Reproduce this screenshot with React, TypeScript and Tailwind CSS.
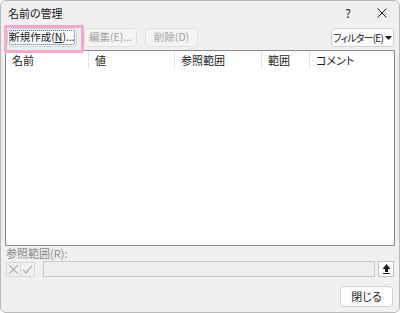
const font = { fontFamily: '"Noto Sans CJK JP", "Noto Sans", sans-serif' };

function Btn({ children, disabled, className = "" }: { children: React.ReactNode; disabled?: boolean; className?: string }) {
  return (
    <button
      className={`h-[19px] rounded-[4px] border leading-none whitespace-nowrap flex items-center justify-center ${
        disabled ? "border-[#e0e0e0] bg-[#f5f5f5] text-[#a0a0a0]" : "border-[#d0d0d0] bg-[#fdfdfd] text-[#1a1a1a]"
      } ${className}`}
    >
      {children}
    </button>
  );
}

export default function App() {
  const cols = [
    { label: "名前", w: "w-[83px]" },
    { label: "値", w: "w-[86px]" },
    { label: "参照範囲", w: "w-[87px]" },
    { label: "範囲", w: "w-[48px]" },
    { label: "コメント", w: "flex-1" },
  ];
  return (
    <div style={font} className="w-[400px] h-[313px] bg-white [font-feature-settings:'palt']">
      <div className="relative w-full h-full bg-[#f0f0f0] border border-[#b8b8b8] rounded-[6px] flex flex-col text-[#1a1a1a] overflow-hidden">
        {/* title bar */}
        <div className="h-[24px] flex items-center justify-between pl-[7px]">
          <span className="text-[11px]">名前の管理</span>
          <div className="flex items-center h-full">
            <span className="w-[34px] text-center text-[12px]">?</span>
            <span className="w-[34px] flex justify-center">
              <svg width="10" height="10" viewBox="0 0 10 10"><path d="M0.5 0.5L9.5 9.5M9.5 0.5L0.5 9.5" stroke="#1a1a1a" strokeWidth="1" /></svg>
            </span>
          </div>
        </div>

        {/* toolbar */}
        <div className="flex items-center pl-[6px] pr-[5px] mt-[3px] h-[19px]">
          <Btn className="w-[70px] text-[10.5px] border-[#5b8fd6] outline outline-1 outline-dotted outline-[#2a62b8] -outline-offset-[3px]">
            新規作成(<span className="underline">N</span>)...
          </Btn>
          <Btn disabled className="w-[53px] ml-[7px] text-[10.5px]">編集(E)...</Btn>
          <Btn disabled className="w-[53px] ml-[8px] text-[10.5px]">削除(D)</Btn>
          <div className="flex-1" />
          <Btn className="w-[63px] gap-[2px] text-[10px] tracking-[-0.8px]">
            <span>フィルター(E)</span>
            <svg width="7" height="4" viewBox="0 0 7 4" className="shrink-0"><path d="M0 0h7L3.5 4z" fill="#1a1a1a" /></svg>
          </Btn>
        </div>

        {/* list */}
        <div className="mx-[4px] mt-[3px] h-[196px] bg-white border border-[#828790] flex flex-col">
          <div className="h-[18px] flex">
            {cols.map((c, i) => (
              <div
                key={c.label}
                className={`${c.w} flex items-center pl-[6px] text-[11px] ${i < cols.length - 1 ? "border-r border-[#e5e5e5]" : ""}`}
              >
                {c.label}
              </div>
            ))}
          </div>
        </div>

        {/* ref range */}
        <div className="px-[5px] text-[11px] text-[#8a8a8a] leading-[14px]">参照範囲(R):</div>
        <div className="flex items-center px-[5px] mt-[1px] h-[16px]">
          <div className="w-[15px] h-[15px] border border-[#d8d8d8] flex items-center justify-center">
            <svg width="11" height="11" viewBox="0 0 11 11"><path d="M1 1L10 10M10 1L1 10" stroke="#b0b0b0" strokeWidth="1.2" /></svg>
          </div>
          <div className="w-[15px] h-[15px] border border-[#d8d8d8] flex items-center justify-center ml-[-1px]">
            <svg width="11" height="11" viewBox="0 0 11 11"><path d="M1 6L4 9L10 2" stroke="#b0b0b0" strokeWidth="1.2" fill="none" /></svg>
          </div>
          <div className="flex-1 h-[16px] ml-[8px] border border-[#c8c8c8] bg-[#efefef]" />
          <div className="w-[16px] h-[16px] ml-[3px] border border-[#c0c0c0] bg-white flex items-center justify-center">
            <svg width="9" height="10" viewBox="0 0 9 10"><path d="M4.5 0L8.5 5H6V8H3V5H0.5z" fill="#1a1a1a" /><rect x="1" y="9" width="7" height="1" fill="#1a1a1a" /></svg>
          </div>
        </div>

        <div className="flex justify-end px-[6px] mt-[9px]">
          <Btn className="w-[53px] h-[21px] text-[11px]">閉じる</Btn>
        </div>

        {/* highlight annotation */}
        <div className="absolute left-[3px] top-[24px] w-[80px] h-[28px] border-[3px] border-[#f4a9d0] rounded-[2px] pointer-events-none" />
      </div>
    </div>
  );
}
